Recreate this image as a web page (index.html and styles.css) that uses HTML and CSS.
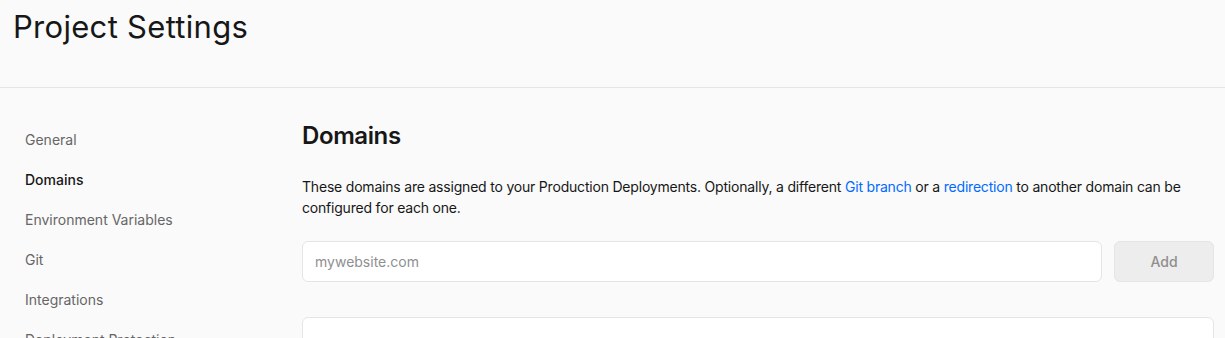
FILE: index.html
```html
<!DOCTYPE html>
<html lang="en">
<head>
<meta charset="UTF-8">
<meta name="viewport" content="width=device-width, initial-scale=1.0">
<title>Project Settings</title>
<link rel="stylesheet" href="styles.css">
</head>
<body>
<header class="page-header">
<h1>Project Settings</h1>
</header>

<div class="layout">
<nav class="sidebar">
<a href="#" class="nav-item">General</a>
<a href="#" class="nav-item active">Domains</a>
<a href="#" class="nav-item">Environment Variables</a>
<a href="#" class="nav-item">Git</a>
<a href="#" class="nav-item">Integrations</a>
<a href="#" class="nav-item">Deployment Protection</a>
</nav>

<main class="content">
<h2>Domains</h2>
<p class="description">These domains are assigned to your Production Deployments. Optionally, a different <a href="#">Git branch</a> or a <a href="#">redirection</a> to another domain can be configured for each one.</p>

<form class="add-domain">
<input type="text" class="domain-input" placeholder="mywebsite.com">
<button type="submit" class="add-button" disabled>Add</button>
</form>

<div class="domain-card"></div>
</main>
</div>
</body>
</html>
```

FILE: styles.css
```css
body {
font-family: Inter, "Noto Sans", sans-serif;
background-color: #fafafa;
color: #171717;
margin: 0;
overflow: hidden;
}

.page-header {
height: 87px;
border-bottom: 1px solid #e5e5e5;
padding: 0 13px;
}

.page-header h1 {
margin: 0;
padding-top: 8px;
font-size: 31px;
font-weight: 400;
line-height: 38px;
letter-spacing: 0.3px;
}

.layout {
display: flex;
}

.sidebar {
width: 302px;
flex-shrink: 0;
padding: 32px 0 0 25px;
box-sizing: border-box;
display: flex;
flex-direction: column;
}

.nav-item {
display: block;
height: 40px;
line-height: 40px;
font-size: 14px;
color: #666;
text-decoration: none;
}

.nav-item.active {
color: #171717;
font-weight: 500;
}

.content {
flex: 1;
padding: 32px 11px 0 0;
}

.content h2 {
margin: 0;
font-size: 24px;
font-weight: 600;
line-height: 32px;
letter-spacing: -0.4px;
}

.description {
margin: 24px 0 0;
font-size: 14px;
line-height: 21px;
letter-spacing: -0.2px;
color: #171717;
}

.description a {
color: #006bff;
text-decoration: none;
}

.add-domain {
display: flex;
gap: 12px;
margin-top: 23px;
}

.domain-input {
flex: 1;
height: 41px;
box-sizing: border-box;
padding: 0 12px;
border: 1px solid #e5e5e5;
border-radius: 6px;
background: #fff;
font-family: inherit;
font-size: 14px;
color: #171717;
}

.domain-input::placeholder {
color: #8f8f8f;
}

.add-button {
width: 100px;
height: 41px;
border: 1px solid #e5e5e5;
border-radius: 6px;
background: #ededed;
color: #8f8f8f;
font-family: inherit;
font-size: 14px;
font-weight: 500;
}

.domain-card {
margin-top: 35px;
height: 60px;
background: #fff;
border: 1px solid #e5e5e5;
border-radius: 6px;
}
```
